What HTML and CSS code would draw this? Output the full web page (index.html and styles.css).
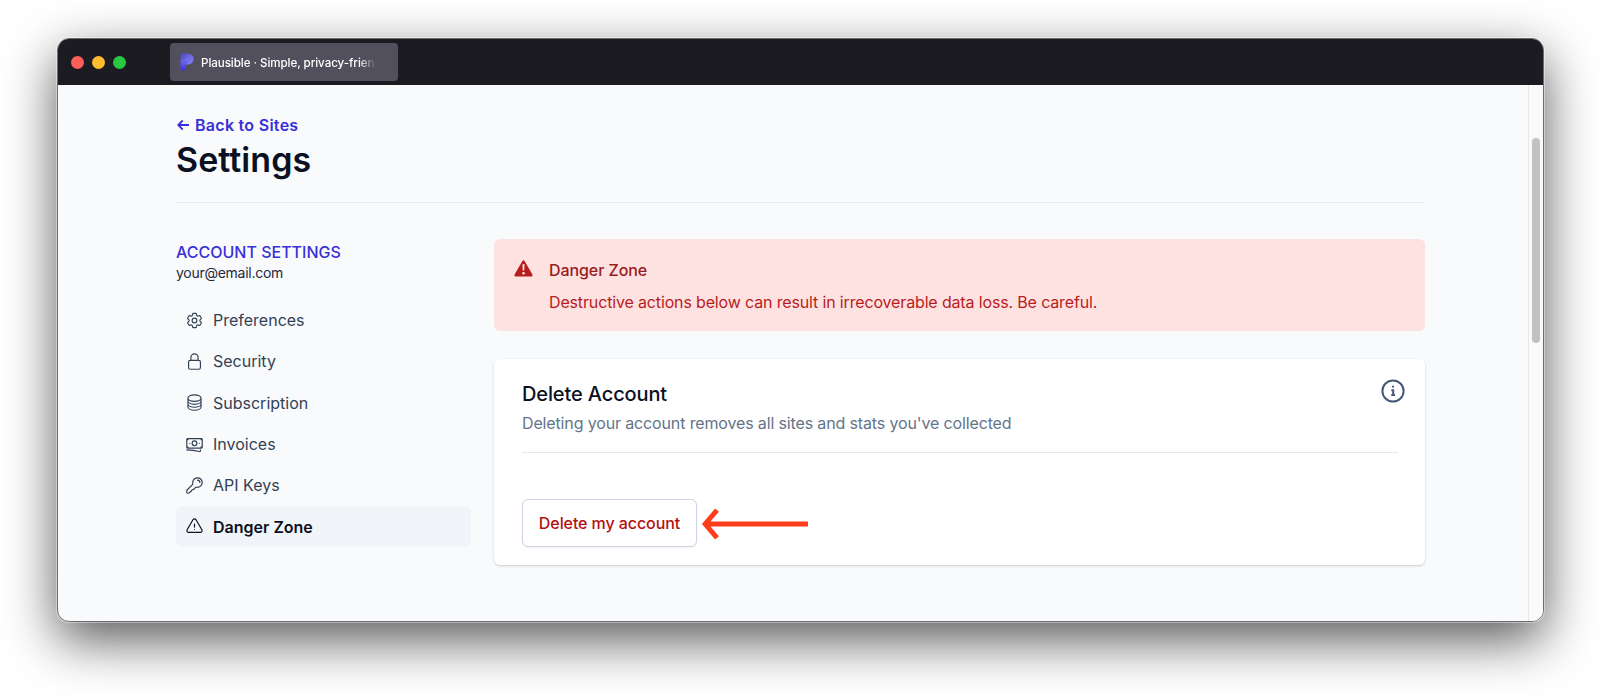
FILE: index.html
```html
<!DOCTYPE html>
<html lang="en">
<head>
<meta charset="utf-8">
<title>Plausible · Simple, privacy-friendly analytics</title>
<link rel="stylesheet" href="styles.css">
</head>
<body>
<div class="window">
  <header class="titlebar">
    <div class="lights"><span class="light red"></span><span class="light yellow"></span><span class="light green"></span></div>
    <div class="tab">
      <svg class="tab-logo" viewBox="0 0 14 18">
        <defs>
          <linearGradient id="stem" x1="0" y1="0" x2="0" y2="1"><stop offset="0" stop-color="#7f7ae8"/><stop offset="1" stop-color="#3d30f0"/></linearGradient>
          <linearGradient id="bowl" x1="0" y1="0" x2="1" y2="1"><stop offset="0" stop-color="#4a48b8"/><stop offset="1" stop-color="#8b85ff"/></linearGradient>
        </defs>
        <path fill="url(#bowl)" d="M.5.5H8Q13.500.8 13.500 5.500Q13.300 11 8 11.500H5L.5 9Z"/>
        <path fill="url(#stem)" d="M.5 8.500L4 7.500 6 5.500 9 4.500 8 8.500 5.800 11.400V15Q5.300 17.500 3 17.500Q.5 17.500.5 15Z"/>
      </svg>
      <span class="tab-title">Plausible · Simple, privacy-frien</span>
    </div>
  </header>
  <div class="viewport">
    <main class="page">
      <a class="back"><svg class="back-arrow" viewBox="0 0 13 12"><path d="M12 6H1.500M5.700 1.500L1.200 6L5.700 10.500"/></svg>Back to Sites</a>
      <h1 class="title">Settings</h1>
      <div class="columns">
        <aside class="sidebar">
          <div class="account">ACCOUNT SETTINGS</div>
          <div class="email">your@email.com</div>
          <nav class="nav">
            <a class="item"><svg class="icon" viewBox="0 0 24 24"><path d="M9.594 3.94c.09-.542.56-.94 1.11-.94h2.593c.55 0 1.02.398 1.11.94l.213 1.281c.063.374.313.686.645.87.074.04.147.083.22.127.325.196.72.257 1.075.124l1.217-.456a1.125 1.125 0 0 1 1.37.49l1.296 2.247a1.125 1.125 0 0 1-.26 1.431l-1.003.827c-.293.241-.438.613-.43.992a7.723 7.723 0 0 1 0 .255c-.008.378.137.75.43.991l1.004.827c.424.35.534.955.26 1.43l-1.298 2.247a1.125 1.125 0 0 1-1.369.491l-1.217-.456c-.355-.133-.75-.072-1.076.124a6.47 6.47 0 0 1-.22.128c-.331.183-.581.495-.644.869l-.213 1.281c-.09.543-.56.94-1.11.94h-2.594c-.55 0-1.019-.398-1.11-.94l-.213-1.281c-.062-.374-.312-.686-.644-.87a6.52 6.52 0 0 1-.22-.127c-.325-.196-.72-.257-1.076-.124l-1.217.456a1.125 1.125 0 0 1-1.369-.49l-1.297-2.247a1.125 1.125 0 0 1 .26-1.431l1.004-.827c.292-.24.437-.613.43-.991a6.932 6.932 0 0 1 0-.255c.007-.38-.138-.751-.43-.992l-1.004-.827a1.125 1.125 0 0 1-.26-1.43l1.297-2.247a1.125 1.125 0 0 1 1.37-.491l1.216.456c.356.133.751.072 1.076-.124.072-.044.146-.086.22-.128.332-.183.582-.495.644-.869l.214-1.28Z"/><path d="M15 12a3 3 0 1 1-6 0 3 3 0 0 1 6 0Z"/></svg>Preferences</a>
            <a class="item"><svg class="icon" viewBox="0 0 24 24"><path d="M16.500 10.500V6.750a4.500 4.500 0 1 0-9 0v3.750m-.75 11.250h10.500a2.250 2.250 0 0 0 2.250-2.250v-6.750a2.250 2.250 0 0 0-2.250-2.250H6.750a2.250 2.250 0 0 0-2.250 2.250v6.750a2.250 2.250 0 0 0 2.250 2.250Z"/></svg>Security</a>
            <a class="item"><svg class="icon" viewBox="0 0 24 24"><path d="M20.250 6.375c0 2.278-3.694 4.125-8.250 4.125S3.750 8.653 3.750 6.375m16.500 0c0-2.278-3.694-4.125-8.250-4.125S3.750 4.097 3.750 6.375m16.500 0v11.250c0 2.278-3.694 4.125-8.250 4.125s-8.250-1.847-8.250-4.125V6.375m16.500 0v3.750m-16.500-3.750v3.750m16.500 0v3.750C20.250 16.153 16.556 18 12 18s-8.250-1.847-8.250-4.125v-3.750m16.500 0c0 2.278-3.694 4.125-8.250 4.125s-8.250-1.847-8.250-4.125"/></svg>Subscription</a>
            <a class="item"><svg class="icon" viewBox="0 0 24 24"><path d="M2.250 18.750a60.070 60.070 0 0 1 15.797 2.101c.727.198 1.453-.342 1.453-1.096V18.750M3.750 4.500v.75A.75.75 0 0 1 3 6h-.75m0 0v-.375c0-.621.504-1.125 1.125-1.125H20.250M2.250 6v9m18-10.500v.75c0 .414.336.75.75.75h.75m-1.500-1.500h.375c.621 0 1.125.504 1.125 1.125v9.750c0 .621-.504 1.125-1.125 1.125h-.375m1.500-1.500H21a.75.75 0 0 0-.75.75v.75m0 0H3.750m0 0h-.375a1.125 1.125 0 0 1-1.125-1.125V15m1.500 1.500v-.75A.75.75 0 0 0 3 15h-.75M15 10.500a3 3 0 1 1-6 0 3 3 0 0 1 6 0Zm3 0h.008v.008H18V10.500Zm-12 0h.008v.008H6V10.500Z"/></svg>Invoices</a>
            <a class="item"><svg class="icon" viewBox="0 0 24 24"><path d="M15.750 5.250a3 3 0 0 1 3 3m3 0a6 6 0 0 1-7.029 5.912c-.563-.097-1.159.026-1.563.43L11 16.750Q10.300 17.300 9.300 17.400Q8.400 17.600 8.300 18.400Q8.100 19.500 7.100 19.700Q6.300 19.900 5.900 20.700Q5.400 21.750 4.400 21.750H3.400Q2.250 21.750 2.250 20.600V18.932c0-.597.237-1.170.659-1.591l6.499-6.499c.404-.404.527-1 .43-1.563A6 6 0 1 1 21.750 8.250Z"/></svg>API Keys</a>
            <a class="item active"><svg class="icon" viewBox="0 0 24 24"><path d="M12 9v3.750m-9.303 3.376c-.866 1.500.217 3.374 1.948 3.374h14.710c1.730 0 2.813-1.874 1.948-3.374L13.949 3.378c-.866-1.500-3.032-1.500-3.898 0L2.697 16.126ZM12 15.750h.007v.008H12v-.008Z"/></svg>Danger Zone</a>
          </nav>
        </aside>
        <section class="content">
          <div class="alert">
            <svg class="alert-icon" viewBox="0 0 20 18"><path fill="#b91c1c" d="M8.700 1.200Q10-.6 11.300 1.200L19.300 15.200Q20 17.300 18 17.500H2Q0 17.300.7 15.200Z"/><path fill="#fee2e2" d="M8.900 4.500h2.200l-.25 6.500h-1.700Z"/><circle cx="10" cy="14" r="1.400" fill="#fee2e2"/></svg>
            <div>
              <div class="alert-title">Danger Zone</div>
              <div class="alert-text">Destructive actions below can result in irrecoverable data loss. Be careful.</div>
            </div>
          </div>
          <div class="card">
            <div class="card-head">
              <div>
                <h2 class="card-title">Delete Account</h2>
                <p class="card-text">Deleting your account removes all sites and stats you've collected</p>
              </div>
              <svg class="info" viewBox="0 0 24 24"><circle cx="12" cy="12" r="10.600"/><path d="M10.300 11.200H12.200V16M10.300 16H14M12 6.800V8.500"/></svg>
            </div>
            <div class="actions">
              <button class="delete">Delete my account</button>
              <svg class="pointer" viewBox="0 0 108 32"><path d="M107 16H5M16 2.200L4.200 16L16 29.800"/></svg>
            </div>
          </div>
        </section>
      </div>
    </main>
    <div class="scrollbar"><div class="thumb"></div></div>
  </div>
</div>
</body>
</html>
```
FILE: styles.css
```css
* { box-sizing: border-box; }
body {
  margin: 0;
  height: 698px;
  overflow: hidden;
  padding: 38px 56px 0 57px;
  background: #fff;
  font-family: Inter, "Liberation Sans", sans-serif;
}
.window {
  height: 584px;
  border: 1px solid #6b6b70;
  border-radius: 12px;
  overflow: hidden;
  display: flex;
  flex-direction: column;
  background: #f9fafc;
  box-shadow: 0 0 0 1px rgba(255,255,255,.4), 0 18px 52px rgba(0,0,0,.66);
}
.titlebar {
  height: 46px;
  flex: none;
  display: flex;
  align-items: center;
  background: #1c1b22;
}
.lights { display: flex; gap: 8px; width: 112px; padding: 0 0 0 13px; }
.light { width: 13px; height: 13px; border-radius: 50%; }
.red { background: #ff5f57; }
.yellow { background: #febc2e; }
.green { background: #28c840; }
.tab {
  width: 228px;
  height: 38px;
  padding: 0 24px 0 10px;
  border-radius: 4px;
  background: #52505c;
  display: flex;
  align-items: center;
}
.tab-logo { width: 14px; height: 18px; flex: none; margin-right: 7px; }
.tab-title {
  flex: none;
  width: 180px;
  padding-top: 1px;
  white-space: nowrap;
  color: #fff;
  font-size: 11.600px;
  font-weight: 500;
  letter-spacing: -.06px;
  -webkit-mask-image: linear-gradient(to right, #000 158px, transparent 175px);
  mask-image: linear-gradient(to right, #000 158px, transparent 175px);
}
.viewport { flex: 1; display: flex; }
.page { flex: 1; padding: 28px 103px 0 118px; }
.back {
  display: flex;
  align-items: center;
  height: 24px;
  color: #3730d8;
  font-size: 16px;
  font-weight: 600;
  letter-spacing: .28px;
}
.back-arrow {
  width: 13px; height: 12px; margin: 0 5px 0 1px;
  fill: none; stroke: currentColor; stroke-width: 1.800;
}
.title {
  margin: 0;
  height: 66px;
  padding-top: 2px;
  border-bottom: 1px solid #e2e8f0;
  color: #0b1022;
  font-size: 34px;
  line-height: 42px;
  font-weight: 600;
  letter-spacing: .05px;
}
.columns { display: flex; gap: 23px; padding-top: 36px; }
.sidebar { width: 295px; }
.account {
  padding-top: 1px;
  line-height: 24px;
  color: #3730d8;
  font-size: 16px;
  font-weight: 500;
}
.email { line-height: 17px; color: #1e293b; font-size: 14px; letter-spacing: -.27px; }
.nav { margin-top: 18px; }
.item {
  display: flex;
  align-items: center;
  height: 41.330px;
  padding: 1px 0 0 9px;
  border-radius: 6px;
  color: #334155;
  font-size: 16px;
}
.active { background: #f1f4f9; color: #0b1022; font-weight: 600; }
.icon {
  width: 19px; height: 19px; margin-right: 9px;
  fill: none; stroke: currentColor; stroke-width: 1.500;
  stroke-linecap: round; stroke-linejoin: round;
}
.content { flex: 1; }
.alert {
  display: flex;
  gap: 16px;
  height: 92px;
  padding: 21px 20px 0;
  border-radius: 6px;
  background: #fee2e2;
}
.alert-icon { width: 19px; height: 17px; }
.alert-title { line-height: 20px; color: #991b1b; font-size: 16px; font-weight: 500; letter-spacing: -.08px; }
.alert-text { margin-top: 12px; line-height: 20px; color: #b91c1c; font-size: 16px; letter-spacing: -.15px; }
.card {
  height: 206px;
  margin-top: 28px;
  padding: 21px 27px 0 28px;
  border-radius: 6px;
  background: #fff;
  box-shadow: 0 1px 3px rgba(0,0,0,.14), 0 1px 2px rgba(0,0,0,.06);
}
.card-head {
  display: flex;
  justify-content: space-between;
  height: 73px;
  border-bottom: 1px solid #e2e8f0;
}
.card-title { margin: 0; line-height: 28px; color: #0b1022; font-size: 20px; font-weight: 500; letter-spacing: -.12px; }
.card-text { margin: 3px 0 0; line-height: 24px; color: #64748b; font-size: 16px; letter-spacing: -.14px; }
.info {
  width: 24px; height: 24px; margin: -1px -7px 0 0;
  fill: none; stroke: #475878; stroke-width: 2;
}
.actions { display: flex; align-items: center; padding-top: 46px; }
.delete {
  width: 175px;
  height: 48px;
  padding: 0;
  border: 1px solid #cbd5e1;
  border-radius: 6px;
  background: #fff;
  box-shadow: 0 1px 2px rgba(0,0,0,.06);
  color: #b40f0f;
  font: 500 16px Inter, "Liberation Sans", sans-serif;
  letter-spacing: -.08px;
}
.pointer {
  width: 108px; height: 32px; margin: 2px 0 0 4px;
  fill: none; stroke: #fb3d1b; stroke-width: 5;
}
.scrollbar {
  width: 15px;
  padding: 53px 0 0 2.500px;
  border-left: 1px solid #e8e8ea;
  background: #fafafa;
}
.thumb { width: 8.500px; height: 205px; border-radius: 5px; background: #c1c1c1; }
```
